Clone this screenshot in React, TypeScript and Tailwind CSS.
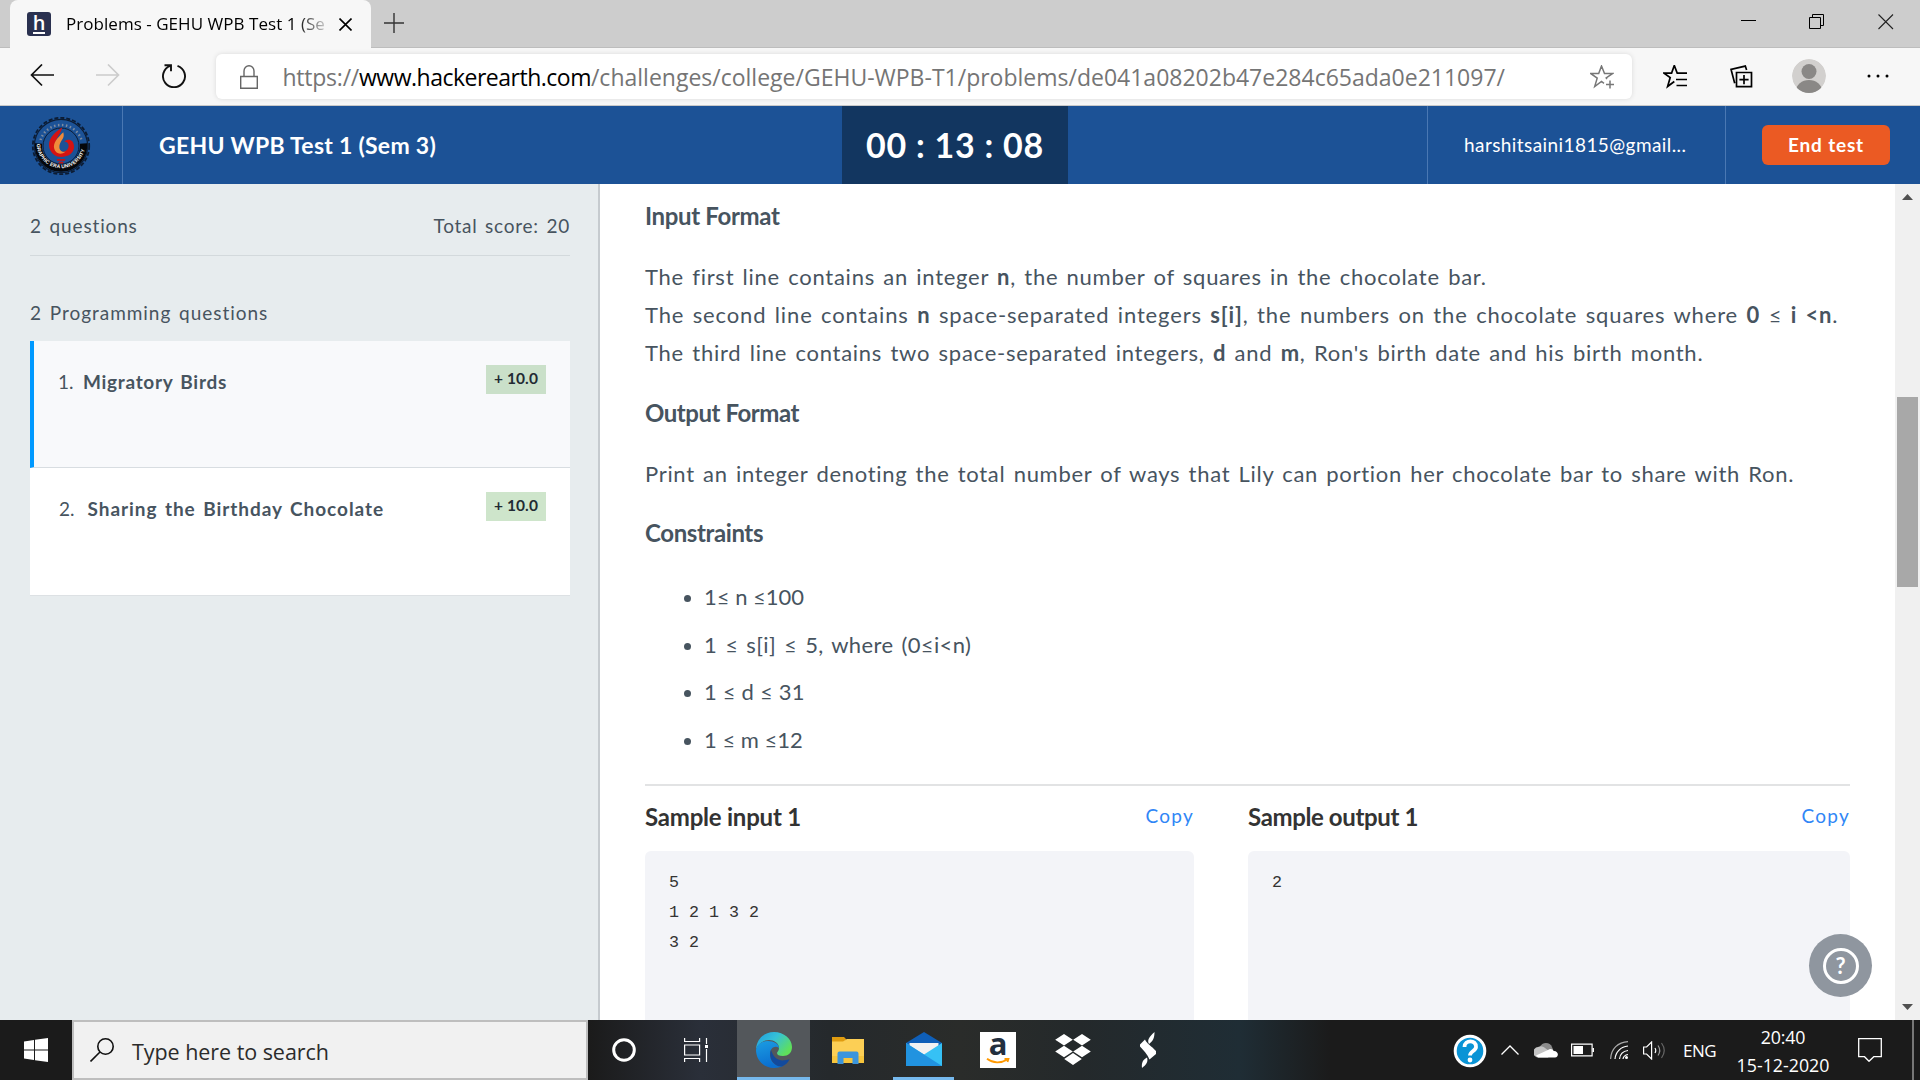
import type { ReactNode } from "react";

const PROX = "font-['Lato','Liberation_Sans',sans-serif]";
const SEGOE = "font-['Open_Sans','Noto_Sans',sans-serif]";

function T({ c = "", children }: { c?: string; children: ReactNode }) {
  return <span className={`inline-block whitespace-nowrap ${c}`}>{children}</span>;
}

function TabStrip() {
  return (
    <div className="flex h-12 items-start bg-[#cdcdcd] pl-[10px] shadow-[inset_0_-1px_0_#bdbdbd]">
      <div className="flex h-12 w-[361px] items-center rounded-t-lg bg-[#f7f7f7] pl-[17px]">
        <div className={`flex h-6 w-6 items-center justify-center rounded-[3px] bg-[#2a3150] text-white ${SEGOE}`}>
          <span className="border-b-2 border-white text-[20px] leading-[18px] font-semibold">h</span>
        </div>
        <div className={`ml-[15px] w-[265px] overflow-hidden text-[17px] leading-6 text-black ${SEGOE} [mask-image:linear-gradient(90deg,#000_230px,transparent_266px)]`}>
          <T c="tracking-[0.04px]">Problems - GEHU WPB Test 1 (Se</T>
        </div>
        <svg className="ml-2 h-[13px] w-[13px]" viewBox="0 0 13 13" stroke="#000" strokeWidth="1.6"><path d="M.5.5l12 12M12.5.5l-12 12" /></svg>
      </div>
      <svg className="ml-[13px] mt-[13px] h-5 w-5" viewBox="0 0 20 20" stroke="#333" strokeWidth="1.4"><path d="M10 0v20M0 10h20" /></svg>
      <div className="ml-auto flex items-center pt-[14px] pr-[26px]">
        <svg className="h-4 w-4" viewBox="0 0 16 16"><path d="M0 6.5h15" stroke="#000" /></svg>
        <svg className="ml-[52px] h-4 w-4" viewBox="0 0 16 16" fill="none" stroke="#000"><path d="M.5 3.5h11v11H.5zM3.5 3.5v-3h11v11h-3" /></svg>
        <svg className="ml-[53px] h-4 w-4" viewBox="0 0 16 16" stroke="#222" strokeWidth="1.1"><path d="M.5.5l14.500 14.500M15 .5L.5 15" /></svg>
      </div>
    </div>
  );
}

function Toolbar() {
  return (
    <div className="flex h-[58px] items-start border-b border-[#c9c9c9] bg-[#f7f7f7] pt-[6px]">
      <svg className="ml-[30px] mt-[10px] h-6 w-6" viewBox="0 0 24 24" fill="none" stroke="#111" strokeWidth="1.7"><path d="M24 11H1.500M12 .5L1.500 11 12 21.500" /></svg>
      <svg className="ml-[42px] mt-[10px] h-6 w-6" viewBox="0 0 24 24" fill="none" stroke="#ccc" strokeWidth="1.7"><path d="M0 11h22.500M12 .5L22.500 11 12 21.500" /></svg>
      <svg className="ml-[42px] mt-[10px] h-6 w-6" viewBox="0 0 24 24" fill="none" stroke="#111" strokeWidth="1.9"><path d="M15.500 1.800a11 11 0 1 1-7.300.1" /><path d="M2.500 1.200h6.500v6" /></svg>
      <div className="ml-[30px] flex h-[45px] w-[1416px] items-center rounded-md bg-white shadow-[0_0_5px_rgba(0,0,0,0.12)]">
        <svg className="ml-6 h-6 w-[18px]" viewBox="0 0 18 24" fill="none" stroke="#666" strokeWidth="1.4"><path d="M.7 11.500h16.600v11.800H.7zM4 11.500V6a5 5.300 0 0 1 10 0v5.500" /></svg>
        <div className={`ml-[24.500px] flex pt-[2px] text-[23px] leading-[33px] text-[#757575] ${SEGOE}`}>
          <T c="tracking-[-0.24px]">https://</T>
          <T c="tracking-[-0.5px] text-black">www.hackerearth.com</T>
          <T>/challenges/college/GEHU-WPB-T1/problems/de041a08202b47e284c65ada0e211097/</T>
        </div>
        <svg className="ml-auto mr-[18px] h-6 w-6" viewBox="0 0 24 24" fill="none" stroke="#777" strokeWidth="1.5"><path d="M17 14l-.8-1 6.300-4.400h-8L11.500 1 8.700 8.600H.9l6.300 4.500L4.700 21.500l6.800-5 2.500 1.800M20 15.500v8M16 19.500h8" /></svg>
      </div>
      <svg className="ml-[31px] mt-[11px] h-6 w-6" viewBox="0 0 24 24" fill="none" stroke="#000" strokeWidth="1.7"><path d="M16 8.600h-1.800L11.300 1 8.600 8.600H1l6.200 4.500L4.600 22l6.700-5M24 8.700H14M24 15H13M24 21H13.500" transform="translate(0 -.5)" /></svg>
      <svg className="ml-[43px] mt-[11px] h-6 w-6" viewBox="0 0 24 24" fill="none" stroke="#000" strokeWidth="1.700"><path d="M6.500 7.500h15v14.200h-15zM14 10v9.200M9.400 14.600h9.200M4.700 18.300L1 4.300l14.300-3.200 1.300 4" /></svg>
      <svg className="ml-[38px] mt-[5px] h-[34px] w-[34px]" viewBox="0 0 34 34"><defs><clipPath id="av"><circle cx="17" cy="17" r="17" /></clipPath></defs><g clipPath="url(#av)"><circle cx="17" cy="17" r="17" fill="#d2d0ce" /><circle cx="17" cy="12.500" r="7.500" fill="#8a8886" /><ellipse cx="17" cy="32" rx="13" ry="11" fill="#8a8886" /></g></svg>
      <svg className="ml-[41px] mt-5 h-1 w-6" viewBox="0 0 24 4"><circle cx="2" cy="2" r="1.500" /><circle cx="11" cy="2" r="1.500" /><circle cx="20" cy="2" r="1.500" /></svg>
    </div>
  );
}

function UniversityLogo() {
  return (
    <svg className="h-[60px] w-[60px]" viewBox="0 0 60 60" fill="none">
      <circle cx="30" cy="30" r="28.200" stroke="#0c1c33" strokeWidth="1.800" strokeDasharray="4 2" />
      <circle cx="30" cy="30" r="26.600" stroke="#0c1c33" strokeWidth="1.200" />
      <circle cx="30" cy="30" r="18" stroke="#0c1c33" strokeWidth="1" />
      <path d="M7.500 27.500a22.600 22.600 0 1 0 45 0" stroke="#05070b" strokeWidth="7" />
      <path d="M9.500 24a21.500 21.500 0 0 1 41 0" stroke="#7c8ba0" strokeWidth="2.400" strokeDasharray="1.500 2.500" />
      <path id="arcBottom" d="M5.800 28a24.200 24.200 0 0 0 48.400 0" />
      <text fill="#fff" fontSize="5" fontWeight="700" fontFamily="Liberation Sans"><textPath href="#arcBottom" textLength="70">GRAPHIC ERA UNIVERSITY</textPath></text>
      <g transform="translate(-4.500 -4.500) scale(1.150)">
        <path d="M31 14c-8 5-13 11-11 18 2 6 8 9 14 7 7-2 9-8 6-13-2-2-5-2-7 0 5 0 5 8-1 9-6 1-9-4-6-10 1-4 4-6 5-11z" fill="#d41313" />
        <path d="M32 18c-5 5-9 9-8 14 1 5 6 6 10 3-5 1-7-4-4-9 2-3 3-4 2-8z" fill="#f08a3a" />
        <path d="M26.500 42h7M28 44.500h4" stroke="#c01515" strokeWidth="1.600" />
      </g>
    </svg>
  );
}

function Header() {
  return (
    <div className={`flex h-[78px] items-center bg-[#1c5296] text-white ${PROX}`}>
      <div className="flex h-full w-[123px] items-center justify-center border-r border-[#4a78b3] pt-px"><UniversityLogo /></div>
      <div className="w-[719px] pb-px pl-[36px] text-[23px] leading-[32px] font-bold"><T c="tracking-[0.27px]">GEHU WPB Test 1 (Sem 3)</T></div>
      <div className="flex h-full w-[226px] items-center justify-center bg-[#123660] text-[34px] leading-[40px] font-bold"><T c="tracking-[0.76px]">00 : 13 : 08</T></div>
      <div className="ml-auto flex h-full w-[299px] items-center border-x border-[#4a78b3] pl-[36px] text-[19px]"><T c="tracking-[0.42px]">harshitsaini1815@gmail...</T></div>
      <div className="ml-[36px] mr-[30px] flex h-10 w-32 items-center justify-center rounded-md bg-[#eb5a23] text-[19px] font-bold"><T c="tracking-[0.83px]">End test</T></div>
    </div>
  );
}

function Question({ n, title, active }: { n: string; title: string; active?: boolean }) {
  return (
    <div className={`flex justify-between border-b pr-6 text-[#47545f] ${active ? "h-[127px] border-l-4 border-b-[#d8dde1] border-l-[#0099ff] bg-[#f8f9fb] pl-6" : "h-32 border-b-[#dde1e4] bg-white pl-[29px]"}`}>
      <div className="flex pt-[27px] text-[19px] leading-[28px] [word-spacing:2px]">
        <T>{n}</T>
        <T c={active ? "ml-[9.500px] font-bold tracking-[0.7px]" : "ml-[13px] font-bold tracking-[0.94px]"}>{title}</T>
      </div>
      <div className={`mt-6 flex h-[29px] w-[60px] justify-center text-[15.500px] leading-[26px] font-bold text-[#222b33] ${active ? "bg-[#cae0c9]" : "bg-[#cee5cb]"}`}><T c="tracking-[0.1px]">+ 10.0</T></div>
    </div>
  );
}

function Sidebar() {
  return (
    <div className={`h-full w-[600px] shrink-0 border-r-2 border-[#c6cbcf] bg-[#e7ecee] pr-[28px] pl-[30px] text-[19px] leading-[28px] text-[#47545f] ${PROX}`}>
      <div className="flex h-[72px] justify-between border-b border-[#d3d9dc] pt-[28px] [word-spacing:2px]">
        <T c="tracking-[0.85px]">2 questions</T>
        <T c="tracking-[0.75px]">Total score: 20</T>
      </div>
      <div className="pt-[43px] [word-spacing:2px]"><T c="tracking-[0.96px]">2 Programming questions</T></div>
      <div className="mt-[14px]">
        <Question active n="1." title="Migratory Birds" />
        <Question n="2." title="Sharing the Birthday Chocolate" />
      </div>
    </div>
  );
}

function Sample({ title, lines, cls, titleCls }: { title: string; lines: string[]; cls: string; titleCls: string }) {
  return (
    <div className={cls}>
      <div className="flex justify-between">
        <T c={`text-[24px] leading-[36px] font-bold text-[#333] ${titleCls}`}>{title}</T>
        <T c="text-[19px] leading-[34px] tracking-[1.250px] text-[#2f86f6]">Copy</T>
      </div>
      <div className="mt-4 h-[200px] rounded-md bg-[#f3f4f8] pt-[17px] pl-6 text-[16.670px] leading-[30px] text-[#333] font-['Liberation_Mono',monospace]">
        {lines.map((l) => <div key={l}>{l}</div>)}
      </div>
    </div>
  );
}

const CONSTRAINTS = [
  { text: "1≤ n ≤100", cls: "" },
  { text: "1 ≤ s[i] ≤ 5, where (0≤i<n)", cls: "tracking-[0.37px] [word-spacing:2px]" },
  { text: "1 ≤ d ≤ 31", cls: "tracking-[0.2px]" },
  { text: "1 ≤ m ≤12", cls: "" },
];

function Content() {
  const h = "text-[24px] leading-[38px] font-bold";
  const p = "text-[22px] leading-[38px] [word-spacing:2px]";
  return (
    <div className={`min-w-0 flex-1 overflow-hidden bg-white pt-[13px] pr-[45px] pl-[45px] text-[#47545f] ${PROX}`}>
      <h3 className={h}><T c="tracking-[-0.35px]">Input Format</T></h3>
      <p className={`mt-[23px] ${p}`}>
        <T c="tracking-[0.73px]">The first line contains an integer <b>n</b>, the number of squares in the chocolate bar.</T><br />
        <T c="tracking-[0.850px]">The second line contains <b>n</b> space-separated integers <b>s[i]</b>, the numbers on the chocolate squares where <b>0</b> ≤ <b>i &lt;n</b>.</T><br />
        <T c="tracking-[0.740px]">The third line contains two space-separated integers, <b>d</b> and <b>m</b>, Ron's birth date and his birth month.</T>
      </p>
      <h3 className={`mt-[22px] ${h}`}><T c="tracking-[-0.46px]">Output Format</T></h3>
      <p className={`mt-[23px] ${p}`}><T c="tracking-[0.690px]">Print an integer denoting the total number of ways that Lily can portion her chocolate bar to share with Ron.</T></p>
      <h3 className={`mt-[21px] ${h}`}><T c="tracking-[-0.39px]">Constraints</T></h3>
      <ul className="mt-[21px] pl-[39px] text-[22px] leading-[47.700px]">
        {CONSTRAINTS.map(({ text, cls }) => (
          <li key={text} className="flex items-center"><span className="mt-[3px] mr-[13px] h-[7px] w-[7px] rounded-full bg-[#47545f]" /><T c={cls}>{text}</T></li>
        ))}
      </ul>
      <div className="mt-5 flex border-t-2 border-[#e2e3e4] pt-[13px]">
        <Sample cls="w-[549px]" title="Sample input 1" titleCls="tracking-[-0.22px]" lines={["5", "1 2 1 3 2", "3 2"]} />
        <Sample cls="ml-[54px] w-[602px]" title="Sample output 1" titleCls="tracking-[-0.38px]" lines={["2"]} />
      </div>
    </div>
  );
}

function Scrollbar() {
  return (
    <div className="flex w-[25px] flex-col items-center bg-[#f0f0f0] py-[10px]">
      <svg className="h-[6px] w-[11px]" viewBox="0 0 11 6"><path d="M5.500 0L11 6H0z" fill="#505050" /></svg>
      <div className="mt-[197px] h-[190px] w-[21px] bg-[#a8a8a8]" />
      <svg className="mt-auto h-[6px] w-[11px]" viewBox="0 0 11 6"><path d="M0 0h11L5.500 6z" fill="#505050" /></svg>
    </div>
  );
}

function EdgeIcon() {
  return (
    <svg className="h-9 w-9" viewBox="0 0 36 36">
      <defs>
        <linearGradient id="eg1" x1="0" y1="0" x2="1" y2=".6"><stop offset="0" stopColor="#1e9de0" /><stop offset=".5" stopColor="#35c1d8" /><stop offset="1" stopColor="#5fe05a" /></linearGradient>
        <linearGradient id="eg2" x1="0" y1="0" x2=".3" y2="1"><stop offset="0" stopColor="#1b9de2" /><stop offset="1" stopColor="#0b6fd0" /></linearGradient>
      </defs>
      <path d="M0 17C1 7 8 0 18 0c10 0 18 7 18 15 0 6-4 9-9 9-4 0-6-1-6-3 0-1 2-2 2-5 0-5-5-8-10-8C7 8 2 12 0 17z" fill="url(#eg1)" />
      <path d="M0 18C1 12 6 9 12 9c6 0 11 3 11 7-4-3-9 0-9 6 0 7 5 13 13 12-3 1-6 2-9 2C8 36 0 28 0 18z" fill="url(#eg2)" />
      <path d="M15 18c-3 8 3 17 11 16.500 4-2 6-4 7.500-7-1-.3-2 .5-5 .8-6 .7-11-2.300-13.500-10.300z" fill="#124a9c" />
    </svg>
  );
}

function Taskbar() {
  return (
    <div className={`flex h-[60px] bg-[linear-gradient(90deg,#1b1b1b_0,#1b1b1b_590px,#2a2f39_700px,#25292c_830px,#2a2c2a_960px,#24292b_1080px,#1f2d35_1240px,#1b1b1b_1330px)] text-white ${SEGOE}`}>
      <div className="flex w-[72px] items-center justify-center"><svg className="h-6 w-6" viewBox="0 0 24 24" fill="#fff"><path d="M0 3.400L10 2v9.500H0zM11 1.800L24 0v11.500H11zM0 12.500h10V22L0 20.600zM11 12.500h13V24l-13-1.800z" /></svg></div>
      <div className="flex w-[516px] items-center border-2 border-[#bebebe] bg-[#f1f1f1] pl-4 text-[#2b2b2b]">
        <svg className="h-6 w-6" viewBox="0 0 24 24" fill="none" stroke="#111" strokeWidth="1.600"><circle cx="15.500" cy="8.500" r="7.700" /><path d="M10 14L.5 23.500" /></svg>
        <div className="ml-[18px] pt-1 text-[21.500px] leading-[30px]"><T c="tracking-[-0.05px]">Type here to search</T></div>
      </div>
      <div className="flex w-[149px] items-center pl-6">
        <svg className="h-6 w-6" viewBox="0 0 24 24" fill="none"><circle cx="12" cy="12" r="10.300" stroke="#fff" strokeWidth="3" /></svg>
        <svg className="ml-12 h-6 w-[25px]" viewBox="0 0 25 24" fill="none" stroke="#fff" strokeWidth="1.200"><path d="M.6 7h15v10H.6zM.6 0v3.500h15V0M.6 24v-3.500h15V24M22.500 0v6M22.500 11v13" /><path d="M21 7h3v3h-3z" fill="#fff" stroke="none" /></svg>
      </div>
      <div className="flex w-[73px] items-center justify-center border-b-[3px] border-[#76b9ed] bg-[#53575b] pt-[3px]"><EdgeIcon /></div>
      <div className="flex w-[83px] items-center pl-[22px]">
        <svg className="h-7 w-8" viewBox="0 0 32 28"><path d="M0 1h12l3 3h-2v4H0z" fill="#e09c10" /><path d="M0 5.500h11L15 3h17v24H0z" fill="#fccf55" /><path d="M0 20h32v7H0z" fill="#f7c53c" /><path d="M5.500 28V17.500q0-2 2-2h17q2 0 2 2V28h-6v-6h-9v6z" fill="#3b95dc" /></svg>
      </div>
      <div className="flex w-[61px] items-center justify-center border-b-[3px] border-[#76b9ed] pt-px">
        <svg className="h-[34px] w-9" viewBox="0 0 36 34"><path d="M0 11L18 0l18 11v4H0z" fill="#0f5fb8" /><path d="M3.500 11h29v13h-29z" fill="#f2f2f2" /><path d="M0 11l18 11.500L36 11v23H0z" fill="#36c1f5" /><path d="M0 11l36 23H0z" fill="#2193e0" /></svg>
      </div>
      <div className="ml-[26px] mt-3 flex h-9 w-9 flex-col items-center bg-white">
        <span className="h-[26px] text-[31px] leading-[23px] font-bold text-[#232f3e]">a</span>
        <svg className="h-[6px] w-6" viewBox="0 0 24 6" fill="none" stroke="#ff9900" strokeWidth="1.800"><path d="M1 .8c6 4.600 14 4.600 20 1M18.500 .8h4L21.500 4" /></svg>
      </div>
      <svg className="ml-[39px] mt-[14px] h-[31px] w-9" viewBox="0 0 36 31" fill="#fff"><path d="M9 0l8.800 5.700L9 11.400.2 5.700zM27 0l8.800 5.700-8.800 5.700-8.800-5.700zM9 11.800l8.800 5.700L9 23.200.2 17.500zM27 11.800l8.800 5.700-8.800 5.700-8.800-5.700zM18 19l8.800 6L18 31l-8.800-6z" /></svg>
      <svg className="ml-[49px] mt-3 h-9 w-4" viewBox="0 0 16 36" fill="#fff"><path d="M14.500 0c0 5-1 9-5.500 12C7 8 9 5 14.500 0zM5 7.500c1.500 4 7 7 11 11.500v3l-6.500 5.500C7.500 22 3 18 0 14.500v-2zM2 36c-.5-5 .5-8 5-10.500C8.500 30 6 33 2 36z" /></svg>
      <div className="ml-auto flex items-center text-[17px]">
        <svg className="mt-[2px] h-[34px] w-[34px]" viewBox="0 0 34 34"><circle cx="17" cy="17" r="14.800" fill="#0a94d6" stroke="#fff" strokeWidth="3" /><path d="M11.500 13c0-7.500 12-7.500 11.500 0 0 4-6 4-6 8.500" fill="none" stroke="#fff" strokeWidth="3.800" /><circle cx="17" cy="26" r="2.400" fill="#fff" /></svg>
        <svg className="ml-[14px] h-[10px] w-[18px]" viewBox="0 0 18 10" fill="none" stroke="#fff" strokeWidth="1.300"><path d="M.5 9.500L9 1l8.500 8.500" /></svg>
        <svg className="ml-[15px] h-4 w-6" viewBox="0 0 24 16"><path d="M6 5a6.500 6.500 0 0 1 12 0l2 5H5z" fill="#8b8b8b" /><path d="M5 15.500A5 5 0 0 1 4 5c3-1.500 5-.5 7 1l7 5-4 4.500z" fill="#c4c4c4" /><path d="M4 15.500l-2-2L14 8c2-2 5-1 5.500 1 5-.5 6 6 1.500 6.500z" fill="#fff" /></svg>
        <svg className="ml-[13px] h-[14px] w-[23px]" viewBox="0 0 23 14"><path d="M.6 1.100h20.500v11.800H.6z" fill="none" stroke="#fff" strokeWidth="1.200" /><path d="M2.500 3h9.500v8H2.500zM21.500 5H23v4h-1.500z" fill="#fff" /></svg>
        <svg className="ml-4 h-[18px] w-[19px]" viewBox="0 0 19 18" fill="none" stroke="#fff" strokeWidth="1.200"><path d="M.6 18C1 8 8 1 18 .6" stroke="#aaa" /><path d="M5 18C5.500 11 11 5.500 18 5M9.500 18c.5-5 4-8 8.500-8.500M13 18c.5-3 2-4 5-4.500" /><circle cx="16.500" cy="16.500" r="1.500" fill="#fff" stroke="none" /></svg>
        <svg className="ml-[14px] h-[19px] w-[23px]" viewBox="0 0 23 19" fill="none" stroke="#fff" strokeWidth="1.200"><path d="M.6 6v7h3l5 5V1l-5 5zM12 7q1.500 2.500 0 5" /><path d="M15 4.500q3.500 5 0 10" stroke="#999" /><path d="M18.500 2q5.500 7.500 0 15" stroke="#666" /></svg>
        <div className="ml-[17px] w-[33px] pt-[2px]"><T c="tracking-[-0.5px]">ENG</T></div>
        <div className="ml-5 flex w-[94px] flex-col items-center pt-px text-[17.800px] leading-[28px]">
          <T c="tracking-[-0.2px]">20:40</T>
          <T>15-12-2020</T>
        </div>
        <svg className="ml-7 h-6 w-6" viewBox="0 0 24 24" fill="none" stroke="#fff" strokeWidth="1.300"><path d="M.7.7h22.600v18h-7.500L11 23.300l-4.500-4.600H.7z" /></svg>
        <div className="ml-[30px] mr-[6px] h-[60px] w-[2px] bg-[#777]" />
      </div>
    </div>
  );
}

export default function App() {
  return (
    <div className="relative flex h-[1080px] w-[1920px] flex-col overflow-hidden bg-white">
      <TabStrip />
      <Toolbar />
      <Header />
      <div className="flex h-[836px] overflow-hidden">
        <Sidebar />
        <Content />
        <Scrollbar />
      </div>
      <Taskbar />
      <div className={`absolute top-[934px] left-[1809px] flex h-[63px] w-[63px] items-center justify-center rounded-full bg-[#8f969f] ${PROX}`}>
        <span className="flex h-9 w-9 items-center justify-center rounded-full border-[3px] border-white text-[22px] leading-none font-bold text-white">?</span>
      </div>
    </div>
  );
}
